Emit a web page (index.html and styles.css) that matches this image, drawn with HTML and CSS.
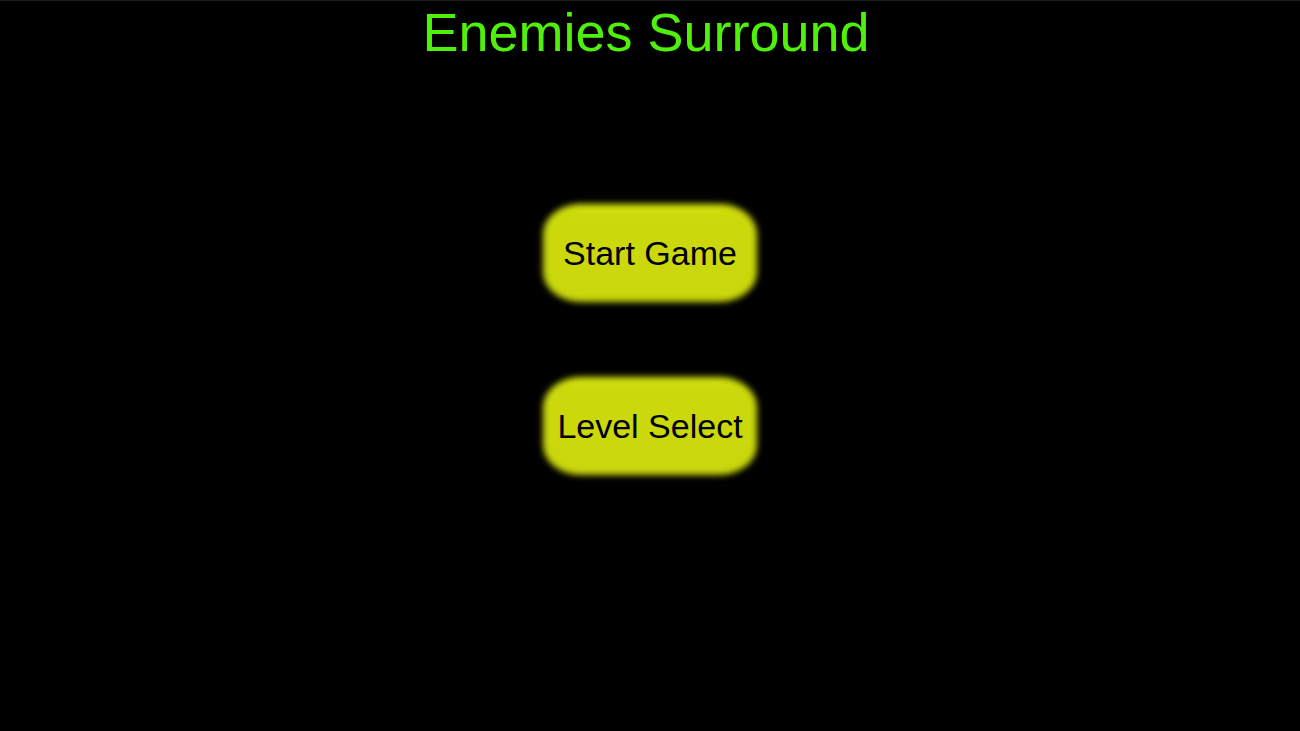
FILE: index.html
```html
<!DOCTYPE html>
<html>
  <head>
    <title>Enemies Surround</title>
    <link rel="stylesheet" href="styles.css">
  </head>
  <body>
    <div id="menu">
      <h1 id="title">Enemies Surround</h1>
      <div class="buttons">
        <button class="menu-button" data-action="start">Start Game</button>
        <button class="menu-button" data-action="levels">Level Select</button>
      </div>
    </div>
  </body>
</html>
```

FILE: styles.css
```css
html, body { margin: 0; height: 100%; background: #000; }
body { border-top: 1px solid #1c1c1c; box-sizing: border-box; font-family: "Liberation Sans", Arial, sans-serif; overflow: hidden; }

#menu {
  display: flex;
  flex-direction: column;
  align-items: center;
}

#title {
  margin: 4px 0 0 0;
  padding-right: 8px;
  font-size: 54px;
  line-height: 54px;
  font-weight: normal;
  color: #4ff00b;
}

.buttons {
  display: flex;
  flex-direction: column;
  align-items: center;
  gap: 73px;
  margin-top: 144px;
}

/* soft glowing pill, blurred background sits under the label */
.menu-button {
  position: relative;
  width: 216px;
  height: 100px;
  border: none;
  background: transparent;
  padding: 0;
  font-family: inherit;
  font-size: 34px;
  color: #000;
  cursor: pointer;
  z-index: 0;
}

.menu-button::before {
  content: "";
  position: absolute;
  inset: 1px;
  border-radius: 38px / 30px;
  background: linear-gradient(#d6e60d, #cbd90c 12%, #c9d70c);
  filter: blur(3px);
  z-index: -1;
}
```
